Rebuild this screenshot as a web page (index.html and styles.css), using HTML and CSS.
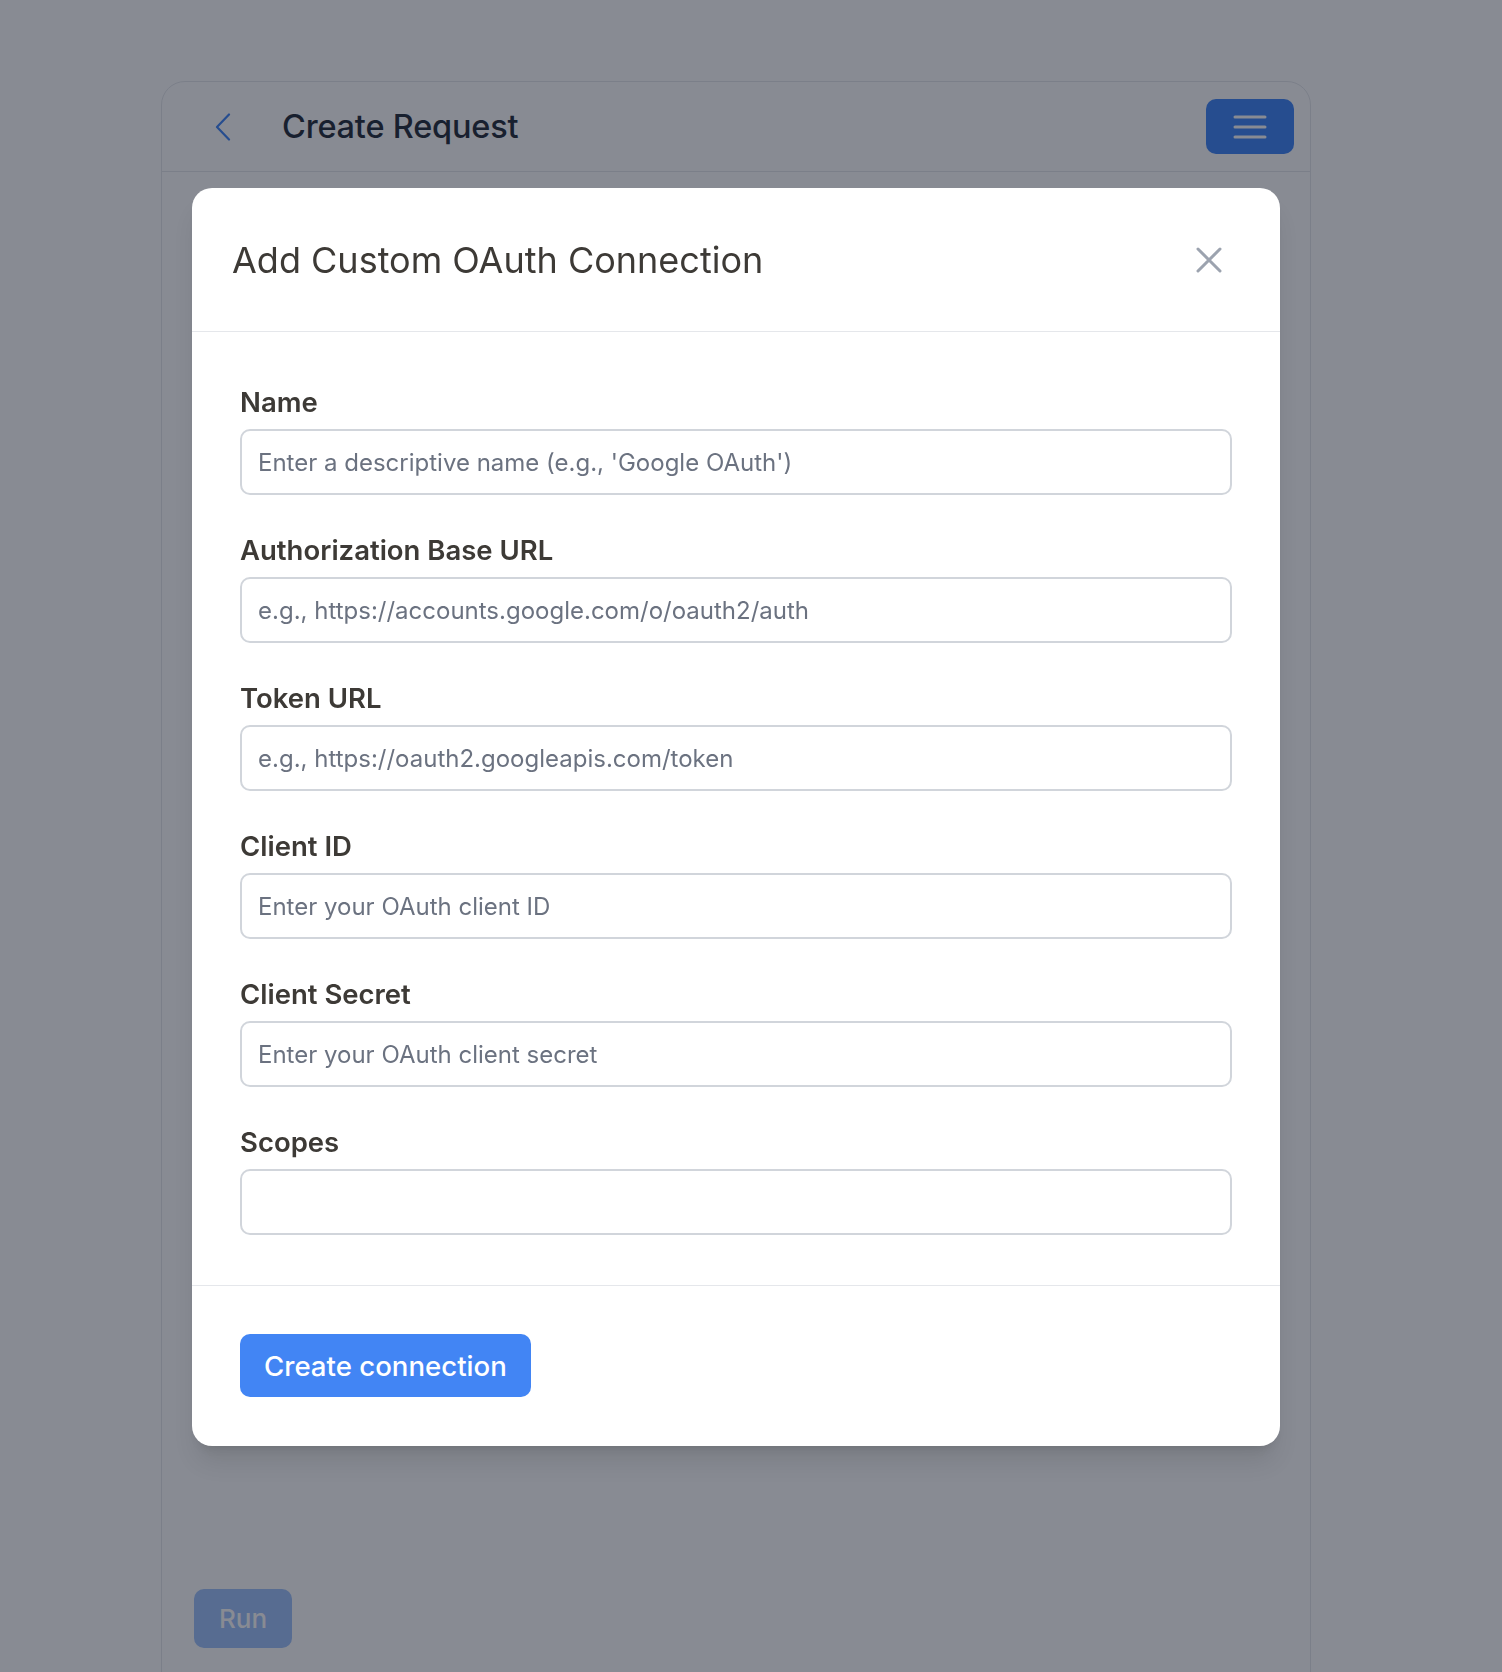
FILE: index.html
```html
<!DOCTYPE html>
<html lang="en">
<head>
<meta charset="utf-8">
<title>Create Request</title>
<link rel="stylesheet" href="styles.css">
</head>
<body>
<div class="page">
  <div class="card">
    <div class="card-header">
      <div class="header-left">
        <button class="back" aria-label="Back">
          <svg width="18" height="28" viewBox="0 0 18 28" fill="none"><path d="M15 1.5 L3 14 L15 26.5" stroke="#3b82f6" stroke-width="2.2" stroke-linecap="round" stroke-linejoin="round"/></svg>
        </button>
        <h1 class="page-title">Create Request</h1>
      </div>
      <button class="menu" aria-label="Menu">
        <svg width="34" height="26" viewBox="0 0 34 26" fill="none"><path d="M2 3H32M2 13H32M2 23H32" stroke="#fff" stroke-width="3" stroke-linecap="round"/></svg>
      </button>
    </div>
    <div class="card-body">
      <div class="spacer"></div>
      <button class="run" disabled>Run</button>
    </div>
  </div>
</div>

<div class="overlay">
  <div class="modal">
    <div class="modal-header">
      <h2 class="modal-title">Add Custom OAuth Connection</h2>
      <button class="close" aria-label="Close">
        <svg width="26" height="26" viewBox="0 0 26 26" fill="none"><path d="M2 2L24 24M24 2L2 24" stroke="#9ca3af" stroke-width="3" stroke-linecap="round"/></svg>
      </button>
    </div>
    <div class="modal-body">
      <div class="field">
        <label class="label">Name</label>
        <input class="input" type="text" placeholder="Enter a descriptive name (e.g., 'Google OAuth')">
      </div>
      <div class="field">
        <label class="label">Authorization Base URL</label>
        <input class="input" type="text" placeholder="e.g., https://accounts.google.com/o/oauth2/auth">
      </div>
      <div class="field">
        <label class="label">Token URL</label>
        <input class="input" type="text" placeholder="e.g., https://oauth2.googleapis.com/token">
      </div>
      <div class="field">
        <label class="label">Client ID</label>
        <input class="input" type="text" placeholder="Enter your OAuth client ID">
      </div>
      <div class="field">
        <label class="label">Client Secret</label>
        <input class="input" type="text" placeholder="Enter your OAuth client secret">
      </div>
      <div class="field">
        <label class="label">Scopes</label>
        <input class="input" type="text">
      </div>
    </div>
    <div class="modal-footer">
      <button class="primary">Create connection</button>
    </div>
  </div>
</div>
</body>
</html>
```

FILE: styles.css
```css
* { box-sizing: border-box; }
html, body { margin: 0; padding: 0; }
body {
  background: #ffffff;
  font-family: Inter, "Noto Sans", "Liberation Sans", sans-serif;
  height: 1672px;
  overflow: hidden;
}
button { font-family: inherit; }

.page {
  padding: 81px 0 0 161px;
}
.card {
  width: 1150px;
  height: 1700px;
  border: 1px solid #e5e7eb;
  border-radius: 24px;
  background: #fff;
}
.card-header {
  height: 90px;
  border-bottom: 1px solid #e5e7eb;
  display: flex;
  align-items: center;
  justify-content: space-between;
  padding: 0 16px 0 52px;
}
.header-left {
  display: flex;
  align-items: center;
  gap: 50px;
}
.back {
  background: none;
  border: 0;
  padding: 0;
  display: flex;
  cursor: pointer;
}
.page-title {
  margin: 0;
  font-size: 32.5px;
  font-weight: 500;
  color: #1f2937;
  letter-spacing: -0.2px;
}
.menu {
  width: 88px;
  height: 55px;
  border: 0;
  border-radius: 10px;
  background: #3b82f6;
  display: flex;
  align-items: center;
  justify-content: center;
  padding: 0;
}
.card-body {
  padding: 0 32px;
}
.spacer { height: 1417px; }
.run {
  width: 98px;
  height: 59px;
  border: 0;
  border-radius: 10px;
  background: #3b82f6;
  color: #fff;
  font-size: 26px;
  font-weight: 500;
  opacity: 0.5;
}

.overlay {
  position: fixed;
  inset: 0;
  background: rgba(17, 24, 39, 0.5);
  padding: 188px 0 0 192px;
}
.modal {
  width: 1088px;
  background: #fff;
  border-radius: 20px;
  box-shadow: 0 20px 25px -5px rgba(0,0,0,0.1), 0 8px 10px -6px rgba(0,0,0,0.1);
  overflow: hidden;
}
.modal-header {
  height: 144px;
  border-bottom: 1px solid #e5e7eb;
  display: flex;
  align-items: center;
  justify-content: space-between;
  padding: 0 58px 0 40px;
}
.modal-title {
  margin: 0;
  font-size: 36px;
  font-weight: 400;
  color: #3d3a36;
  letter-spacing: 0;
}
.close {
  background: none;
  border: 0;
  padding: 0;
  display: flex;
}
.modal-body {
  padding: 52px 48px 50px;
  display: flex;
  flex-direction: column;
  gap: 37px;
  border-bottom: 1px solid #e5e7eb;
}
.field {
  display: flex;
  flex-direction: column;
  gap: 9px;
}
.label {
  font-size: 27.5px;
  line-height: 36px;
  font-weight: 600;
  color: #3d3a36;
}
.input {
  height: 66px;
  border: 2px solid #d1d5db;
  border-radius: 10px;
  padding: 0 16px;
  font-family: inherit;
  font-size: 24px;
  color: #1f2937;
  background: #fff;
  outline: none;
}
.input::placeholder {
  color: #6b7280;
}
.modal-footer {
  padding: 48px 48px 49px;
  display: flex;
}
.primary {
  height: 63px;
  padding: 0 24px;
  border: 0;
  border-radius: 10px;
  background: #4285f4;
  color: #fff;
  font-size: 27.6px;
  font-weight: 500;
}
```
